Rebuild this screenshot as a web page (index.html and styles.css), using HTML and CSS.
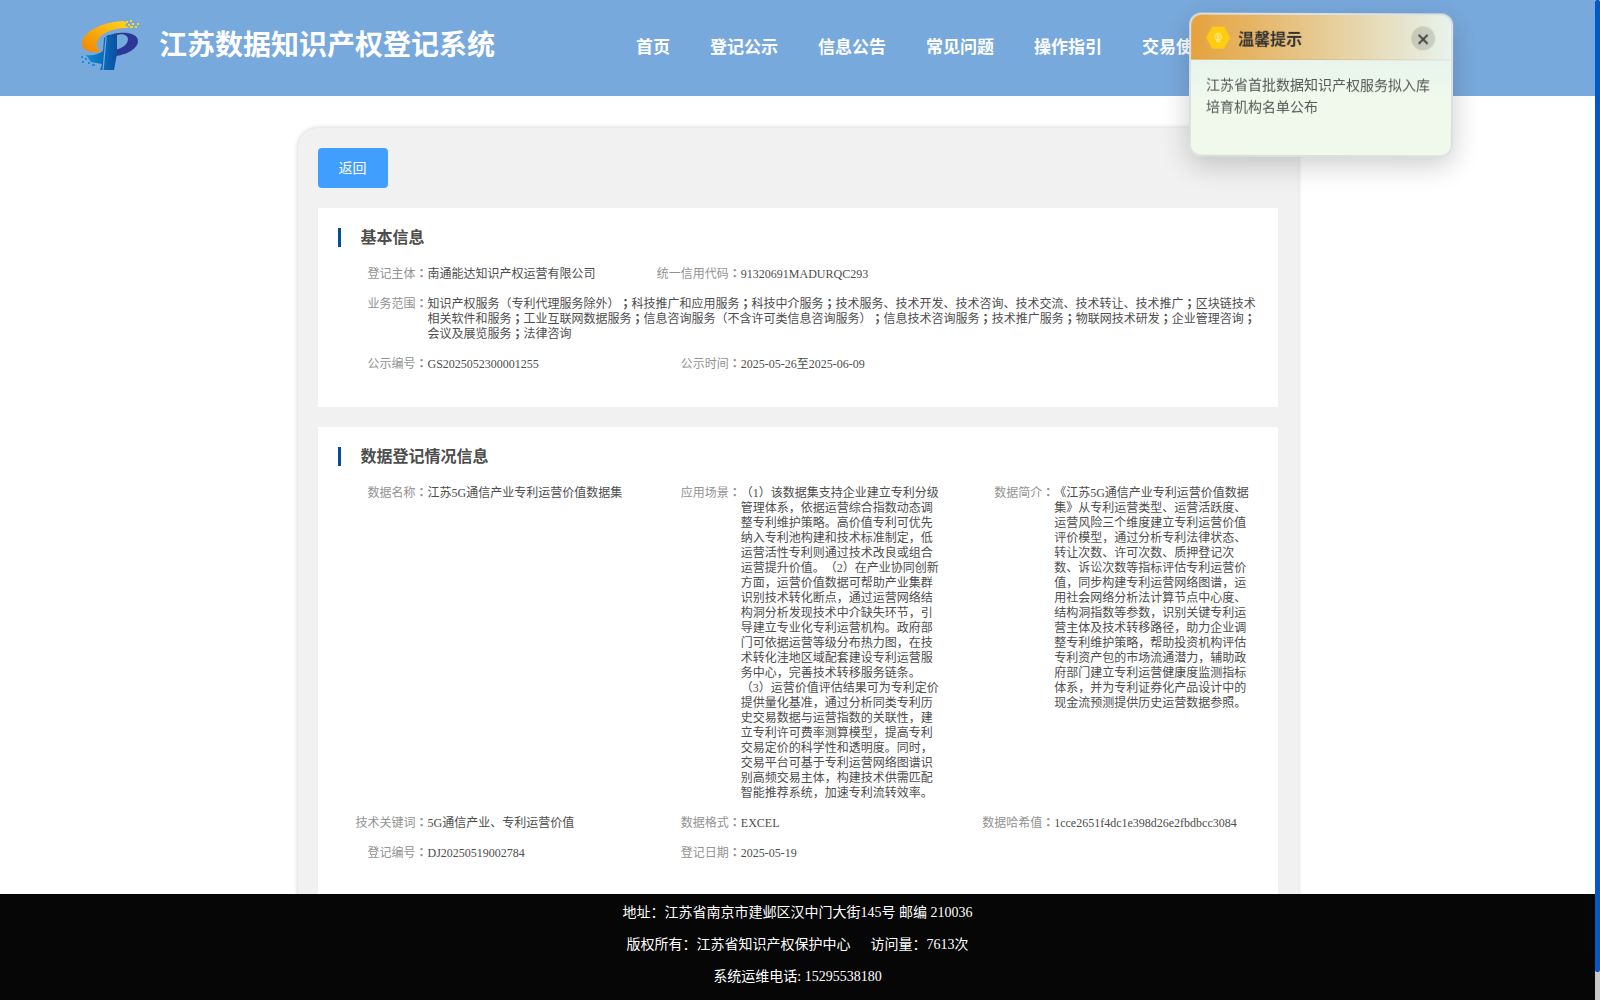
FILE: index.html
```html
<!DOCTYPE html>
<html lang="zh-CN">
<head>
  <meta charset="UTF-8" />
  <meta name="viewport" content="width=device-width, initial-scale=1.0"/>
  <title>江苏数据知识产权登记系统</title>
  <link rel="stylesheet" href="styles.css">
</head>
<body>

  <header class="header">
    <svg class="logo" viewBox="0 0 60 52">
      <defs>
        <linearGradient id="orange" x1="0" y1="1" x2="1" y2="0">
          <stop offset="0" stop-color="#f08300"/>
          <stop offset="1" stop-color="#ffd51e"/>
        </linearGradient>
        <linearGradient id="blue" x1="0" y1="0" x2="1" y2="0">
          <stop offset="0" stop-color="#0c8fd6"/>
          <stop offset="1" stop-color="#0a4fa2"/>
        </linearGradient>
      </defs>
      <path fill="url(#orange)" d="M45 1 L48 3 L46 5 L50 8 C32 8 20 14 18 23 C17 27 19 30 22 32 C11 33 3 30 3 24 C3 12 22 2 45 1Z"/>
      <path fill="#ffd51e" d="M47 1h2v2h-2zM51 0h2v2h-2zM49 4h2v2h-2zM53 3h2v2h-2zM58 3h2v2h-2zM51 6h3v2h-3zM56 6h2v2h-2z"/>
      <path fill="#2c3796" d="M30 16 C37 11 59 11 59 21 C59 29 47 35 36 36 V30 C44 28 49 24 49 19 C49 15 43 13 38 15 V30 H30Z"/>
      <path fill="url(#blue)" d="M25 18 L29 15 L38 14 V34 L35 50 H21 L23 44 L12 42 L7 35 C14 36 20 34 24 31Z"/>
      <path fill="#78a9dd" d="M26.500 17h1.200l-3 33h-1.200z"/>
      <path fill="#1691d5" d="M2 36h2v2H2zM6 38h2v2H6zM3 41h2v2H3zM9 42h2v2H9zM13 44h3v2h-3z"/>
    </svg>
    <h1>江苏数据知识产权登记系统</h1>
    <nav class="nav">
      <a>首页</a>
      <a>登记公示</a>
      <a>信息公告</a>
      <a>常见问题</a>
      <a>操作指引</a>
      <a>交易使用</a>
    </nav>
  </header>

  <main class="card">
    <button class="back">返回</button>

    <section class="panel">
      <h2>基本信息</h2>
      <div class="grid">
        <div class="item"><label>登记主体<i lang="zh-TW">：</i></label><p>南通能达知识产权运营有限公司</p></div>
        <div class="item span2"><label>统一信用代码<i lang="zh-TW">：</i></label><p>91320691MADURQC293</p></div>
        <div class="item span3"><label>业务范围<i lang="zh-TW">：</i></label><p>知识产权服务（专利代理服务除外）<i lang="zh-TW">；</i>科技推广和应用服务<i lang="zh-TW">；</i>科技中介服务<i lang="zh-TW">；</i>技术服务、技术开发、技术咨询、技术交流、技术转让、技术推广<i lang="zh-TW">；</i>区块链技术<br>相关软件和服务<i lang="zh-TW">；</i>工业互联网数据服务<i lang="zh-TW">；</i>信息咨询服务（不含许可类信息咨询服务）<i lang="zh-TW">；</i>信息技术咨询服务<i lang="zh-TW">；</i>技术推广服务<i lang="zh-TW">；</i>物联网技术研发<i lang="zh-TW">；</i>企业管理咨询<i lang="zh-TW">；</i><br>会议及展览服务<i lang="zh-TW">；</i>法律咨询</p></div>
        <div class="item"><label>公示编号<i lang="zh-TW">：</i></label><p>GS2025052300001255</p></div>
        <div class="item"><label>公示时间<i lang="zh-TW">：</i></label><p>2025-05-26至2025-06-09</p></div>
      </div>
    </section>

    <section class="panel">
      <h2>数据登记情况信息</h2>
      <div class="grid">
        <div class="item"><label>数据名称<i lang="zh-TW">：</i></label><p>江苏5G通信产业专利运营价值数据集</p></div>
        <div class="item"><label>应用场景<i lang="zh-TW">：</i></label><p>（1）该数据集支持企业建立专利分级<br>管理体系，依据运营综合指数动态调<br>整专利维护策略。高价值专利可优先<br>纳入专利池构建和技术标准制定，低<br>运营活性专利则通过技术改良或组合<br>运营提升价值。（2）在产业协同创新<br>方面，运营价值数据可帮助产业集群<br>识别技术转化断点，通过运营网络结<br>构洞分析发现技术中介缺失环节，引<br>导建立专业化专利运营机构。政府部<br>门可依据运营等级分布热力图，在技<br>术转化洼地区域配套建设专利运营服<br>务中心，完善技术转移服务链条。<br>（3）运营价值评估结果可为专利定价<br>提供量化基准，通过分析同类专利历<br>史交易数据与运营指数的关联性，建<br>立专利许可费率测算模型，提高专利<br>交易定价的科学性和透明度。同时，<br>交易平台可基于专利运营网络图谱识<br>别高频交易主体，构建技术供需匹配<br>智能推荐系统，加速专利流转效率。</p></div>
        <div class="item"><label>数据简介<i lang="zh-TW">：</i></label><p>《江苏5G通信产业专利运营价值数据<br>集》从专利运营类型、运营活跃度、<br>运营风险三个维度建立专利运营价值<br>评价模型，通过分析专利法律状态、<br>转让次数、许可次数、质押登记次<br>数、诉讼次数等指标评估专利运营价<br>值，同步构建专利运营网络图谱，运<br>用社会网络分析法计算节点中心度、<br>结构洞指数等参数，识别关键专利运<br>营主体及技术转移路径，助力企业调<br>整专利维护策略，帮助投资机构评估<br>专利资产包的市场流通潜力，辅助政<br>府部门建立专利运营健康度监测指标<br>体系，并为专利证券化产品设计中的<br>现金流预测提供历史运营数据参照。</p></div>
        <div class="item"><label>技术关键词<i lang="zh-TW">：</i></label><p>5G通信产业、专利运营价值</p></div>
        <div class="item"><label>数据格式<i lang="zh-TW">：</i></label><p>EXCEL</p></div>
        <div class="item"><label>数据哈希值<i lang="zh-TW">：</i></label><p>1cce2651f4dc1e398d26e2fbdbcc3084</p></div>
        <div class="item"><label>登记编号<i lang="zh-TW">：</i></label><p>DJ20250519002784</p></div>
        <div class="item"><label>登记日期<i lang="zh-TW">：</i></label><p>2025-05-19</p></div>
      </div>
    </section>
  </main>

  <footer class="footer">
    <p>地址：江苏省南京市建邺区汉中门大街145号 邮编 210036</p>
    <p>版权所有：江苏省知识产权保护中心<span class="visits">访问量：7613次</span></p>
    <p>系统运维电话: 15295538180</p>
  </footer>

  <aside class="notice">
    <div class="notice-head">
      <svg class="notice-icon" viewBox="0 0 24 24">
        <path fill="#fc1" d="M6 1h12l6 11-6 11H6L0 12z"/>
        <g fill="none" stroke="#fff3a8" stroke-width="1">
          <circle cx="12" cy="11" r="3.3"/>
          <path d="M10.500 14.500v1.500h3v-1.500M12 14v-3M10.500 10l1.500 1 1.500-1"/>
        </g>
      </svg>
      <strong>温馨提示</strong>
      <span class="close">
        <svg viewBox="0 0 12 12"><path d="M1.500 1.500l9 9M10.500 1.500l-9 9"/></svg>
      </span>
    </div>
    <p>江苏省首批数据知识产权服务拟入库培育机构名单公布</p>
  </aside>

  <div class="scrollbar"><div class="thumb"></div></div>

</body>
</html>
```
FILE: styles.css
```css
* {
  box-sizing: border-box;
}
body {
  margin: 0;
  padding-right: 5px;
  height: 1000px;
  overflow: hidden;
  background: #fff;
  color: #4d4d4d;
  font-family: "Liberation Serif", "Noto Sans CJK SC", serif;
  text-spacing-trim: space-all;
}
h1, h2, p {
  margin: 0;
}
/* full-width colon and semicolon sit in the middle of the box */
i {
  font-family: "Noto Sans CJK TC", sans-serif;
  font-style: normal;
  font-weight: bold;
  line-height: 1;
}
.header {
  display: flex;
  align-items: center;
  height: 96px;
  padding: 0 0 4px 79px;
  background: #78a9dd;
  color: #fff;
}
.logo {
  width: 60px;
  height: 52px;
}
h1 {
  margin-left: 20px;
  font-size: 28px;
  line-height: 40px;
  white-space: nowrap;
}
.nav {
  display: flex;
  gap: 40px;
  margin: 3px 0 0 141px;
  font-size: 17px;
  font-weight: bold;
  line-height: 24px;
  white-space: nowrap;
}
.card {
  width: 1000px;
  height: 872px;
  margin: 32px auto 0;
  padding: 20px;
  overflow: hidden;
  border-radius: 20px 20px 0 0;
  background: #f1f1f1;
  box-shadow: 0 0 5px rgba(0,0,0,0.2);
}
.back {
  display: block;
  width: 70px;
  height: 40px;
  padding: 0 0 2px;
  border: none;
  border-radius: 4px;
  background: #409eff;
  color: #fff;
  font-family: inherit;
  font-size: 14px;
}
.panel {
  margin-top: 20px;
  padding: 20px 0 35px 20px;
  background: #fff;
}
h2 {
  height: 19px;
  padding-left: 20px;
  border-left: 3px solid #004f97;
  font-size: 16px;
  line-height: 20px;
}
.grid {
  display: grid;
  grid-template-columns: repeat(3, 1fr);
  row-gap: 15px;
  margin-top: 20px;
  font-size: 12px;
  line-height: 15px;
}
.item {
  display: flex;
  min-width: 0;
  white-space: nowrap;
}
.item label {
  flex: 0 0 90px;
  color: #929292;
  text-align: right;
}
.span2 {
  grid-column: span 2;
}
.span3 {
  grid-column: span 3;
}
.footer {
  position: fixed;
  left: 0;
  right: 5px;
  bottom: 0;
  height: 106px;
  padding-top: 3px;
  background: #060606;
  color: #fff;
  font-size: 14px;
  line-height: 32px;
  text-align: center;
}
.visits {
  margin-left: 20px;
}
.notice {
  position: fixed;
  top: 13px;
  left: 1189px;
  width: 264px;
  height: 144px;
  overflow: hidden;
  border: 2px solid #dcdfe0;
  border-radius: 12px;
  background: linear-gradient(#e7f3ec 30%, #f0f9eb 60%);
  box-shadow: 0 8px 28px rgba(0,0,0,0.2);
  transform: rotate(0.2deg);
}
.notice-head {
  display: flex;
  align-items: center;
  height: 45px;
  padding: 1px 16px 0 15px;
  border-bottom: 1px solid rgba(0,0,0,0.06);
  background: linear-gradient(90deg, #e6a23c, rgba(230,162,60,0));
  color: #333;
  font-size: 16px;
}
.notice-icon {
  width: 24px;
  height: 24px;
  margin-right: 8px;
}
.close {
  display: flex;
  align-items: center;
  justify-content: center;
  width: 24px;
  height: 24px;
  margin-left: auto;
  border-radius: 50%;
  background: rgba(0,0,0,0.13);
}
.close svg {
  width: 12px;
  height: 12px;
  margin-top: 3px;
  fill: none;
  stroke: #444;
  stroke-width: 1.800;
}
.notice p {
  padding: 15px;
  color: #555;
  font-size: 14px;
  line-height: 22px;
}
.scrollbar {
  position: fixed;
  top: 0;
  right: 0;
  width: 5px;
  height: 1000px;
  background: #c8c8c8;
}
.thumb {
  height: 972px;
  border-radius: 2px;
  background: #0059c6;
}
```
